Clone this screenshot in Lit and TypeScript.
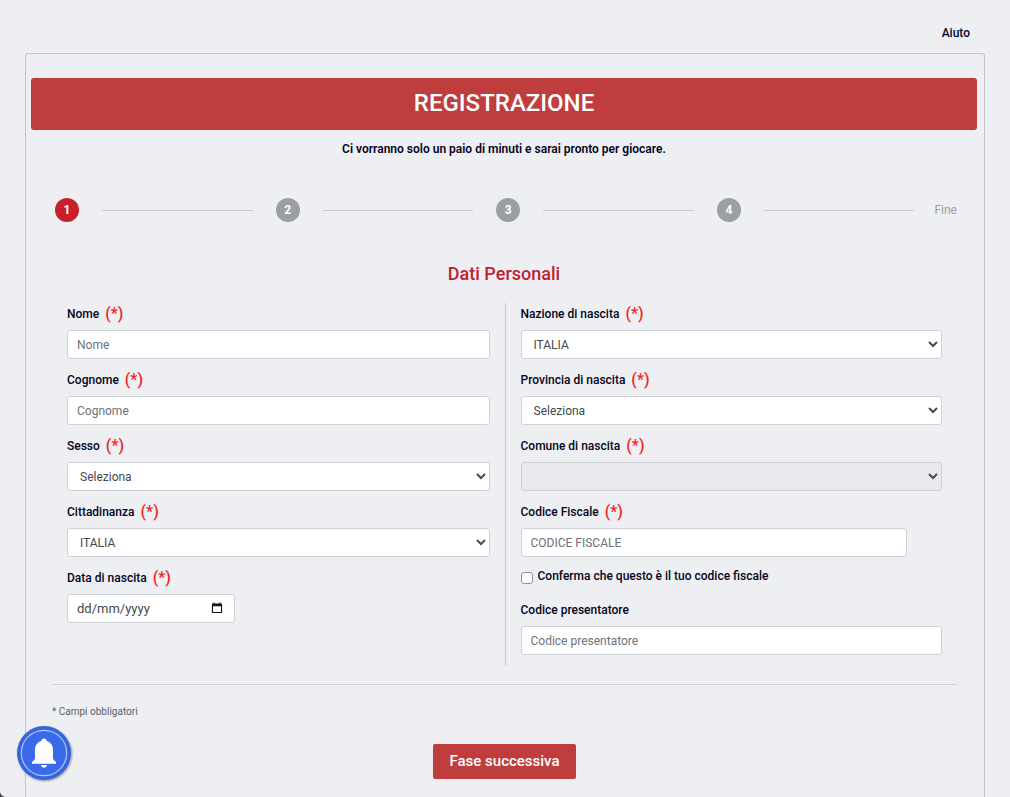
import { LitElement, html, css, svg, nothing } from "lit";
import { customElement, state } from "lit/decorators.js";
import { classMap } from "lit/directives/class-map.js";

interface Field {
  id: string;
  label: string;
  kind: "text" | "select" | "date";
  hint: string;
  required?: boolean;
  disabled?: boolean;
}

const LEFT: Field[] = [
  { id: "nome", label: "Nome", kind: "text", hint: "Nome", required: true },
  { id: "cognome", label: "Cognome", kind: "text", hint: "Cognome", required: true },
  { id: "sesso", label: "Sesso", kind: "select", hint: "Seleziona", required: true },
  { id: "cittadinanza", label: "Cittadinanza", kind: "select", hint: "ITALIA", required: true },
  { id: "nascita", label: "Data di nascita", kind: "date", hint: "dd/mm/yyyy", required: true },
];

const RIGHT: Field[] = [
  { id: "nazione", label: "Nazione di nascita", kind: "select", hint: "ITALIA", required: true },
  { id: "provincia", label: "Provincia di nascita", kind: "select", hint: "Seleziona", required: true },
  { id: "comune", label: "Comune di nascita", kind: "select", hint: "", required: true, disabled: true },
];

@customElement("app-root")
export class AppRoot extends LitElement {
  @state() private step = 1;

  static styles = css`
    :host {
      display: flex;
      flex-direction: column;
      box-sizing: border-box;
      min-height: 100vh;
      padding: 0 25px;
      background: #eeeff3;
      color: #05051e;
      font: 500 12px/18px Roboto, "Liberation Sans", sans-serif;
    }
    *, *::before, *::after { box-sizing: border-box; }
    .top {
      display: flex;
      justify-content: flex-end;
      padding: 24px 15px 11px;
    }
    .help { color: inherit; text-decoration: none; }
    .frame {
      flex: 1;
      padding: 24px 7px 17px 5px;
      border: 1px solid #c3c5c9;
      border-bottom: 0;
      border-radius: 3px 3px 0 0;
    }
    .banner {
      margin: 0;
      padding: 9px 0 11px;
      border-radius: 3px;
      background: #bf3d3d;
      color: #fff;
      text-align: center;
      font-size: 24px;
      line-height: 32px;
      font-weight: 500;
    }
    .intro { margin: 10px 0 0; text-align: center; font-weight: 600; }
    .steps {
      display: flex;
      align-items: center;
      list-style: none;
      margin: 40px 20px 0 24px;
      padding: 0;
    }
    .step { display: flex; align-items: center; flex: 1; }
    .step::after {
      content: "";
      flex: 1;
      height: 1px;
      margin: 0 23px;
      background: #c9cbcf;
    }
    .dot {
      width: 24px;
      height: 24px;
      border-radius: 50%;
      background: #9b9fa3;
      color: #fff;
      text-align: center;
      line-height: 24px;
      font-weight: 700;
    }
    .dot.active { background: #c8202a; }
    .end { margin-left: -3px; color: #9b9da1; font-weight: 400; }
    .title {
      margin: 40px 0 0;
      text-align: center;
      color: #bd2130;
      font-size: 18px;
      line-height: 24px;
      font-weight: 500;
    }
    .form { margin: 17px 20px 0 21px; }
    .columns {
      display: grid;
      grid-template-columns: 1fr 1fr;
      padding-bottom: 18px;
      border-bottom: 1px solid #cfd1d5;
    }
    .column {
      display: flex;
      flex-direction: column;
      gap: 11px;
      padding: 0 15px 11px;
    }
    .column + .column { border-left: 1px solid #c9cbcf; }
    .field { display: flex; flex-direction: column; gap: 6px; }
    .label { display: flex; align-items: center; gap: 6px; line-height: 20px; height: 20px; }
    .column > :first-child { padding-top: 1px; }
    .star { color: #f2231d; font-size: 16px; line-height: 20px; }
    .control, .box { width: 100%; }
    .box { position: relative; display: flex; }
    .control {
      height: 29px;
      margin: 0;
      padding: 0 9px;
      border: 1px solid #ced1d5;
      border-radius: 3px;
      background: #fff;
      color: #44484c;
      font: 400 12px/18px Roboto, "Liberation Sans", sans-serif;
      appearance: none;
    }
    .control::placeholder { color: #6c7278; opacity: 1; }
    .select { padding-left: 12px; }
    .select:disabled { background: #e8eaed; opacity: 1; }
    .fiscal { width: 91.667%; }
    .date-box { width: 168px; }
    .date { font-size: 13px; }
    .date::placeholder { color: #44484c; }
    .chevron { position: absolute; right: 4px; top: 10px; pointer-events: none; }
    .calendar {
      position: absolute;
      right: 10px;
      top: 6px;
      display: flex;
      padding: 2px;
      border: 0;
      background: none;
    }
    .confirm { display: flex; align-items: flex-start; gap: 5px; margin: -1px 0 4px; }
    .check {
      appearance: none;
      width: 12px;
      height: 12px;
      margin: 5px 0 0;
      border: 1px solid #8d9095;
      border-radius: 3px;
      background: #fff;
    }
    .check:checked { background: #bf3d3d; }
    .note { margin: 18px 0 0; color: #5b5e63; font-size: 10px; line-height: 18px; font-weight: 400; }
    .actions { display: flex; justify-content: center; margin-top: 23px; }
    .next {
      padding: 8px 16px;
      border: 0;
      border-radius: 2px;
      background: #bf3d3d;
      color: #fff;
      font: 500 15px/19px Roboto, "Liberation Sans", sans-serif;
    }
    .bell {
      position: fixed;
      left: 16px;
      bottom: 16px;
      padding: 0;
      border: 0;
      border-radius: 50%;
      background: none;
      line-height: 0;
      filter: drop-shadow(1px 1px 1px #0006);
    }
    .corner { position: fixed; left: 0; bottom: 0; }
  `;

  private chevron() {
    return html`<svg class="chevron" width="10" height="8" viewBox="0 0 10 8" aria-hidden="true">
      ${svg`<path d="M1 2 L5 6 L9 2" fill="none" stroke="#484b50" stroke-width="2"/>`}
    </svg>`;
  }

  private control(f: Field) {
    if (f.kind === "select") {
      return html`<div class="box">
        <select class="control select" id=${f.id} ?disabled=${f.disabled}>
          <option>${f.hint}</option>
        </select>
        ${this.chevron()}
      </div>`;
    }
    if (f.kind === "date") {
      return html`<div class="box date-box">
        <input class="control date" id=${f.id} type="text" inputmode="numeric" placeholder=${f.hint} />
        <button class="calendar" type="button" aria-label="Apri calendario">
          <svg width="12" height="12" viewBox="0 0 12 12">
            <path fill="#111" fill-rule="evenodd" d="M2.5 0.5h1.2v1h4.6v-1h1.2v1h.7c.5 0 .9.4.9.9v7.8c0 .5-.4.9-.9.9H1.8c-.5 0-.9-.4-.9-.9V2.4c0-.5.4-.9.9-.9h.7zM2 4.2v5.8h8V4.2z" />
          </svg>
        </button>
      </div>`;
    }
    return html`<input class="control" id=${f.id} type="text" placeholder=${f.hint} />`;
  }

  private field(f: Field) {
    return html`<div class="field">
      <label class="label" for=${f.id}>
        ${f.label}${f.required ? html`<span class="star">(*)</span>` : nothing}
      </label>
      ${this.control(f)}
    </div>`;
  }

  render() {
    return html`
      <nav class="top"><a class="help" href="#aiuto">Aiuto</a></nav>
      <main class="frame">
        <h1 class="banner">REGISTRAZIONE</h1>
        <p class="intro">Ci vorranno solo un paio di minuti e sarai pronto per giocare.</p>
        <ol class="steps">
          ${[1, 2, 3, 4].map(
            (n) => html`<li class="step">
              <span class=${classMap({ dot: true, active: n === this.step })}>${n}</span>
            </li>`
          )}
          <li class="end">Fine</li>
        </ol>
        <h2 class="title">Dati Personali</h2>
        <form class="form" @submit=${(e: Event) => e.preventDefault()}>
          <div class="columns">
            <div class="column">${LEFT.map((f) => this.field(f))}</div>
            <div class="column">
              ${RIGHT.map((f) => this.field(f))}
              <div class="field">
                <label class="label" for="fiscale">Codice Fiscale<span class="star">(*)</span></label>
                <input class="control fiscal" id="fiscale" type="text" placeholder="CODICE FISCALE" />
              </div>
              <div class="confirm">
                <input class="check" id="conferma" type="checkbox" />
                <label for="conferma">Conferma che questo è il tuo codice fiscale</label>
              </div>
              ${this.field({ id: "presentatore", label: "Codice presentatore", kind: "text", hint: "Codice presentatore" })}
            </div>
          </div>
          <p class="note">* Campi obbligatori</p>
          <div class="actions"><button class="next" type="submit">Fase successiva</button></div>
        </form>
      </main>
      <button class="bell" type="button" aria-label="Notifiche">
        <svg width="56" height="56" viewBox="0 0 56 56">
          <circle cx="28" cy="28" r="27" fill="#3565dc" />
          <circle cx="28" cy="28" r="22.7" fill="#3a6ae8" stroke="#a9c6ff" stroke-width="1.2" />
          <path fill="#fff" d="M28 13.5c-1.6 0-2.7 1-2.7 2.500-4 1.200-6.300 4.400-6.300 8.700v8.300c0 1.500-.9 2.700-3 3.800v2h24v-2c-2.100-1.100-3-2.300-3-3.800v-8.300c0-4.300-2.300-7.500-6.300-8.700 0-1.500-1.100-2.500-2.700-2.500zM25 40c.2 1.700 1.400 2.800 3 2.800s2.800-1.100 3-2.800z" />
        </svg>
      </button>
      <svg class="corner" width="5" height="5" viewBox="0 0 5 5" aria-hidden="true">
        <path d="M0 0 Q1 4 5 5 L0 5Z" fill="#4a4a4c" />
      </svg>
    `;
  }
}
